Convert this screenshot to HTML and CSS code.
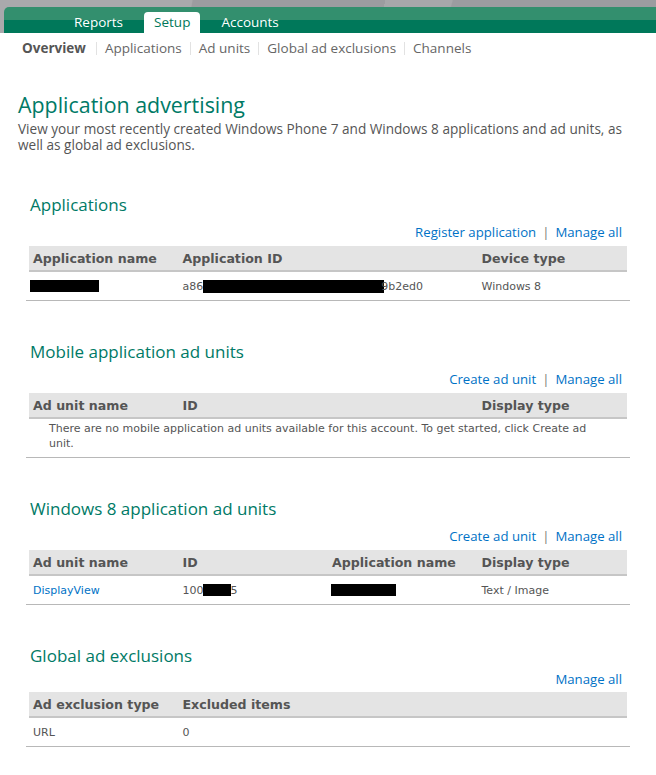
FILE: index.html
```html
<!DOCTYPE html>
<html lang="en">
<head>
<meta charset="utf-8">
<title>Application advertising</title>
<link rel="stylesheet" href="styles.css">
</head>
<body>
<header class="top">
  <nav class="tabs">
    <a class="tab">Reports</a>
    <a class="tab active">Setup</a>
    <a class="tab">Accounts</a>
  </nav>
</header>
<nav class="subnav">
  <a class="sub current">Overview</a>
  <a class="sub">Applications</a>
  <a class="sub">Ad units</a>
  <a class="sub">Global ad exclusions</a>
  <a class="sub">Channels</a>
</nav>
<main class="page">
  <h1 class="title">Application advertising</h1>
  <p class="intro">View your most recently created Windows Phone 7 and Windows 8 applications and ad units, as well as global ad exclusions.</p>

  <section class="sec first">
    <h2 class="sec-title">Applications</h2>
    <div class="actions"><a class="link">Register application</a><span class="pipe">|</span><a class="link">Manage all</a></div>
    <div class="tbl">
      <div class="thead cols">
        <div class="th">Application name</div>
        <div class="th span2">Application ID</div>
        <div class="th">Device type</div>
      </div>
      <div class="trow cols">
        <div class="td"><span class="redact r-name"></span></div>
        <div class="td span2"><span>a86</span><span class="redact r-id"></span><span>9b2ed0</span></div>
        <div class="td">Windows 8</div>
      </div>
    </div>
  </section>

  <section class="sec">
    <h2 class="sec-title">Mobile application ad units</h2>
    <div class="actions"><a class="link">Create ad unit</a><span class="pipe">|</span><a class="link">Manage all</a></div>
    <div class="tbl">
      <div class="thead cols">
        <div class="th">Ad unit name</div>
        <div class="th span2">ID</div>
        <div class="th">Display type</div>
      </div>
      <div class="trow empty">There are no mobile application ad units available for this account. To get started, click Create ad unit.</div>
    </div>
  </section>

  <section class="sec">
    <h2 class="sec-title">Windows 8 application ad units</h2>
    <div class="actions"><a class="link">Create ad unit</a><span class="pipe">|</span><a class="link">Manage all</a></div>
    <div class="tbl">
      <div class="thead cols">
        <div class="th">Ad unit name</div>
        <div class="th">ID</div>
        <div class="th">Application name</div>
        <div class="th">Display type</div>
      </div>
      <div class="trow cols">
        <div class="td"><a class="link">DisplayView</a></div>
        <div class="td"><span>100</span><span class="redact r-unit"></span><span>5</span></div>
        <div class="td"><span class="redact r-app"></span></div>
        <div class="td">Text / Image</div>
      </div>
    </div>
  </section>

  <section class="sec">
    <h2 class="sec-title">Global ad exclusions</h2>
    <div class="actions short"><a class="link">Manage all</a></div>
    <div class="tbl">
      <div class="thead cols">
        <div class="th">Ad exclusion type</div>
        <div class="th span3">Excluded items</div>
      </div>
      <div class="trow cols">
        <div class="td">URL</div>
        <div class="td span3">0</div>
      </div>
    </div>
  </section>
</main>
</body>
</html>
```

FILE: styles.css
```css
* { box-sizing: border-box; }
html, body { margin: 0; padding: 0; background: #fff; }
body { font-family: "Open Sans", "Noto Sans", sans-serif; color: #555; }
a { text-decoration: none; cursor: pointer; }

.top {
  padding-top: 7px;
  background:
    linear-gradient(105deg, transparent 0 58%, #a7a7aa 58% 68%, transparent 68.2%),
    linear-gradient(100deg, #a9a9ac 0 29%, #9c9ca0 29.2% 100%);
}
.tabs {
  margin-left: 4px;
  height: 26px;
  border-top-left-radius: 5px;
  background: linear-gradient(#338f6e 0 13px, #00785a 13px 100%);
  display: flex;
  align-items: flex-end;
  gap: 11px;
  padding-left: 60px;
}
.tab {
  color: #fff;
  font-size: 13.5px;
  line-height: 21px;
  height: 21px;
  padding: 0 10px;
  border-radius: 4px 4px 0 0;
}
.tab.active { background: #fff; color: #00785a; }

.subnav {
  display: flex;
  align-items: center;
  padding: 3px 0 0 22px;
  height: 28px;
}
.sub {
  font-size: 13.5px;
  color: #666;
  padding: 0 8px;
  border-left: 1px solid #e2e2e2;
  line-height: 13px;
}
.sub:first-child { border-left: 0; padding-left: 0; }
.sub.current { font-weight: 700; color: #555; padding-right: 10px; }

.page { padding: 0 26px 0 18px; }
.title {
  margin: 31px 0 0;
  font-size: 21.4px;
  font-weight: 400;
  color: #007a66;
  line-height: 26px;
}
.intro {
  margin: 3px 0 0;
  font-size: 13.6px;
  line-height: 16px;
  color: #555;
}

.sec { margin: 39px 0 0 8px; }
.sec.first { margin-top: 40px; }
.sec-title {
  margin: 0 0 0 4px;
  font-size: 17px;
  font-weight: 400;
  color: #007a66;
  line-height: 24px;
}
.actions {
  display: flex;
  justify-content: flex-end;
  align-items: center;
  gap: 6px;
  padding-right: 8px;
  margin-top: 5px;
  font-size: 13.2px;
  line-height: 20px;
}
.actions.short { margin-top: 3px; line-height: 17px; }
.link { color: #0072c6; }
.pipe { color: #777; }

.tbl {
  margin-top: 4px;
  border-bottom: 1px solid #b8b8b8;
}
.cols { display: grid; grid-template-columns: repeat(4, 1fr); }
.thead {
  margin: 0 3px;
  background: #e4e4e4;
  border-bottom: 2px solid #c6c6c6;
  height: 26px;
  align-items: center;
}
.th {
  font-family: "DejaVu Sans", Verdana, sans-serif;
  font-weight: 700;
  font-size: 12.6px;
  color: #555;
  padding-left: 4px;
  white-space: nowrap;
}
.span2 { grid-column: span 2; }
.span3 { grid-column: span 3; }
.trow { margin: 0 3px; height: 28px; align-items: center; }
.td {
  font-family: "DejaVu Sans", Verdana, sans-serif;
  font-size: 11px;
  color: #555;
  padding-left: 4px;
  display: flex;
  align-items: center;
  white-space: nowrap;
}
.td .link { font-size: 11px; }
.trow.empty {
  height: auto;
  padding: 2px 14px 6px 20px;
  font-family: "DejaVu Sans", Verdana, sans-serif;
  font-size: 11px;
  line-height: 15px;
  color: #555;
}
.redact { display: inline-block; background: #000; height: 12px; }
.r-name { width: 69px; margin-left: -3px; }
.r-id { width: 181px; height: 13px; margin-right: -3px; }
.r-unit { width: 28px; margin-left: -1px; }
.r-app { width: 65px; margin-left: -1px; }
```
